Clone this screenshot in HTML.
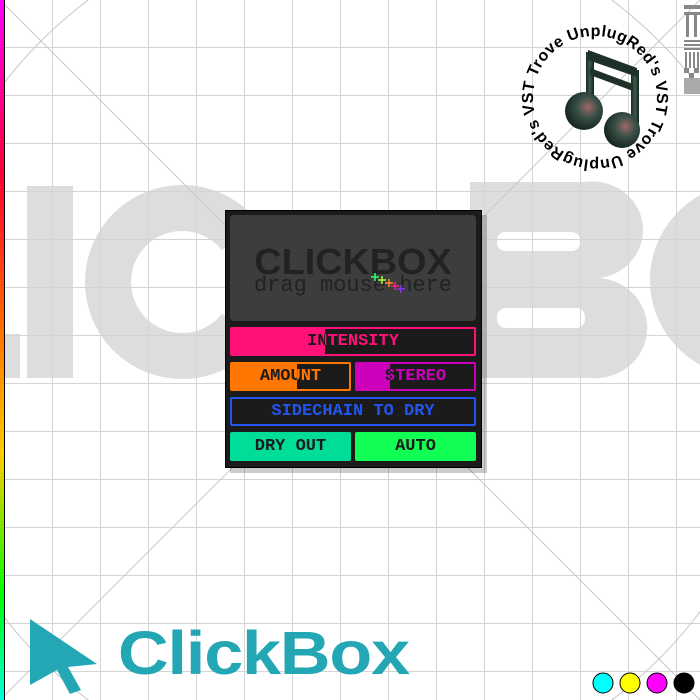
<!DOCTYPE html>
<html style="overflow:hidden;width:700px;height:700px"><head><meta charset="utf-8"><style>
*{margin:0;padding:0;box-sizing:border-box}
body{width:700px;height:700px;overflow:hidden;background:#fff;position:relative;font-family:"Liberation Sans",sans-serif}
.abs{position:absolute}
.bar{left:0;top:0;width:4px;height:700px;background:linear-gradient(#ff00ff 0%,#ff0033 25%,#ff6600 45%,#ffcc00 65%,#00ff00 85%,#00ffdd 100%)}
.bar2{left:4px;top:0;width:1px;height:700px;background:#000}
.w{left:225px;top:210px;width:257px;height:258px;background:#1b1b1b;border:1px solid #000;box-shadow:5px 5px 0 rgba(0,0,0,0.2)}
.drag{left:230px;top:215px;width:246px;height:106px;background:#3d3d3d;border-radius:4px;text-align:center;color:#222}
.t1{position:absolute;left:0;width:246px;top:26px;font:bold 36px "Liberation Sans",sans-serif;transform:scaleX(1.05)}
.t2{position:absolute;left:0;width:246px;top:60px;font:22px "Liberation Mono",monospace;line-height:22px}
.b{position:absolute;height:29px;border:2px solid;border-radius:2px;font:bold 17px "Liberation Mono",monospace;text-align:center;line-height:25px;overflow:hidden;background:#1b1b1b}
.b .f{position:absolute;left:0;top:0;height:100%;overflow:hidden}
.b .f span{position:absolute;left:0;top:0;display:block;text-align:center}
</style></head><body>
<svg class="abs" style="left:0;top:0" width="700" height="700">
<g fill="#dddddd">
<rect x="4" y="334" width="16" height="44"/>
<rect x="27" y="186" width="46" height="192"/>
<path d="M240,236 A74,74 0 1 0 240,328" fill="none" stroke="#dddddd" stroke-width="46"/>
<path d="M470,182 H585 A50,48 0 0 1 600,278 A52,50 0 0 1 590,378 H470 Z"/>
<ellipse cx="750" cy="280" rx="100" ry="98"/>
</g>
<g fill="#fff"><rect x="497" y="232" width="83" height="19" rx="8"/><rect x="497" y="308" width="88" height="20" rx="9"/></g>
<g stroke="#d4d4d4" stroke-width="1">
<line x1="52.5" y1="0" x2="52.5" y2="700"/><line x1="100.5" y1="0" x2="100.5" y2="700"/><line x1="148.5" y1="0" x2="148.5" y2="700"/><line x1="196.5" y1="0" x2="196.5" y2="700"/><line x1="244.5" y1="0" x2="244.5" y2="700"/><line x1="292.5" y1="0" x2="292.5" y2="700"/><line x1="340.5" y1="0" x2="340.5" y2="700"/><line x1="388.5" y1="0" x2="388.5" y2="700"/><line x1="436.5" y1="0" x2="436.5" y2="700"/><line x1="484.5" y1="0" x2="484.5" y2="700"/><line x1="532.5" y1="0" x2="532.5" y2="700"/><line x1="580.5" y1="0" x2="580.5" y2="700"/><line x1="628.5" y1="0" x2="628.5" y2="700"/><line x1="676.5" y1="0" x2="676.5" y2="700"/>
<line y1="47.5" x1="0" y2="47.5" x2="700"/><line y1="95.5" x1="0" y2="95.5" x2="700"/><line y1="143.5" x1="0" y2="143.5" x2="700"/><line y1="191.5" x1="0" y2="191.5" x2="700"/><line y1="239.5" x1="0" y2="239.5" x2="700"/><line y1="287.5" x1="0" y2="287.5" x2="700"/><line y1="335.5" x1="0" y2="335.5" x2="700"/><line y1="383.5" x1="0" y2="383.5" x2="700"/><line y1="431.5" x1="0" y2="431.5" x2="700"/><line y1="479.5" x1="0" y2="479.5" x2="700"/><line y1="527.5" x1="0" y2="527.5" x2="700"/><line y1="575.5" x1="0" y2="575.5" x2="700"/><line y1="623.5" x1="0" y2="623.5" x2="700"/><line y1="671.5" x1="0" y2="671.5" x2="700"/>
</g>
<g stroke="#c8c8c8" stroke-width="1" fill="none">
<line x1="0" y1="0" x2="700" y2="700"/><line x1="700" y1="0" x2="0" y2="700"/>
<circle cx="350" cy="350" r="437"/>
</g>
<path d="M30,619 L97,664 L68,667 L81,690 L70,694 L57,670 L30,685 Z" fill="#24a7b4"/>
<defs>
<radialGradient id="g" cx="0.6" cy="0.4" r="0.7"><stop offset="0" stop-color="#a06868"/><stop offset="0.4" stop-color="#3a5048"/><stop offset="1" stop-color="#0c1a14"/></radialGradient>
<linearGradient id="s" x1="0" x2="1"><stop offset="0" stop-color="#1a2a22"/><stop offset="0.5" stop-color="#3e5a4e"/><stop offset="1" stop-color="#10201a"/></linearGradient>
<path id="cp" d="M533,98 A62,62 0 1 1 657,98 A62,62 0 1 1 533,98"/>
</defs>
<g>
<rect x="586" y="52" width="8" height="55" fill="url(#s)"/>
<rect x="631" y="70" width="8" height="57" fill="url(#s)"/>
<path d="M588,50 L637,68 L637,77 L588,60 Z" fill="#1e3028"/>
<path d="M590,68 L633,84 L633,91 L590,75 Z" fill="#1e3028"/>
<circle cx="584" cy="111" r="19" fill="url(#g)"/>
<circle cx="622" cy="130" r="18" fill="url(#g)"/>
</g>
<g transform="rotate(-15 595 98)"><text font-family="Liberation Sans" font-weight="bold" font-size="16" fill="#000"><textPath href="#cp" textLength="384" lengthAdjust="spacing">VST Trove UnplugRed's VST Trove UnplugRed's</textPath></text></g>
<g fill="#888"><rect x="684" y="5" width="16" height="4"/><rect x="684" y="12" width="16" height="3"/><rect x="686" y="15" width="3" height="22"/><rect x="694" y="15" width="3" height="22"/><rect x="684" y="40" width="16" height="2"/><rect x="684" y="44" width="16" height="2"/><rect x="684" y="48" width="16" height="2"/><rect x="685" y="52" width="2" height="16"/><rect x="689" y="52" width="2" height="16"/><rect x="693" y="52" width="2" height="16"/><rect x="697" y="52" width="2" height="16"/><rect x="684" y="68" width="5" height="5"/><rect x="694" y="68" width="5" height="5"/><rect x="689" y="73" width="5" height="5"/><rect x="684" y="78" width="16" height="16" fill="#aaa"/></g>
<g stroke="#000" stroke-width="1"><circle cx="603" cy="683" r="10" fill="#00ffff"/><circle cx="630" cy="683" r="10" fill="#ffff00"/><circle cx="657" cy="683" r="10" fill="#ff00ff"/><circle cx="684" cy="683" r="10" fill="#000"/></g>
</svg>
<div class="abs bar"></div><div class="abs bar2"></div>
<div class="abs" style="left:118px;top:618px;height:70px;font:bold 61px 'Liberation Sans',sans-serif;line-height:70px;color:#24a7b4;transform:scaleX(1.15);transform-origin:left;letter-spacing:-1px;white-space:nowrap">ClickBox</div>
<div class="abs w"></div>
<div class="abs drag"><div class="t1">CLICKBOX</div><div class="t2">drag mouse here</div>
<svg style="position:absolute;left:140px;top:58px" width="40" height="24"><g stroke-width="1.5"><path d="M5,0v8M1,4h8" stroke="#33ff66"/><path d="M12,3v8M8,7h8" stroke="#aaff33"/><path d="M19,6v8M15,10h8" stroke="#ff8822"/><path d="M25,9v8M21,13h8" stroke="#ff2288"/><path d="M31,12v8M27,16h8" stroke="#8833ff"/></g></svg></div>

<div class="b" style="left:230px;top:327px;width:246px;border-color:#ff1177;color:#ff1177">INTENSITY<div class="f" style="width:93px;background:#ff1177"><span style="width:242px;color:#1b1b1b">INTENSITY</span></div></div>
<div class="b" style="left:230px;top:362px;width:121px;border-color:#ff7700;color:#ff7700">AMOUNT<div class="f" style="width:65px;background:#ff7700"><span style="width:117px;color:#1b1b1b">AMOUNT</span></div></div>
<div class="b" style="left:355px;top:362px;width:121px;border-color:#cc00bb;color:#cc00bb">STEREO<div class="f" style="width:33px;background:#cc00bb"><span style="width:117px;color:#1b1b1b">STEREO</span></div></div>
<div class="b" style="left:230px;top:397px;width:246px;border-color:#2255ee;color:#2255ee">SIDECHAIN TO DRY</div>
<div class="b" style="left:230px;top:432px;width:121px;border-color:#00dd99;background:#00dd99;color:#1b1b1b">DRY OUT</div>
<div class="b" style="left:355px;top:432px;width:121px;border-color:#11ff55;background:#11ff55;color:#1b1b1b">AUTO</div>
</body></html>
